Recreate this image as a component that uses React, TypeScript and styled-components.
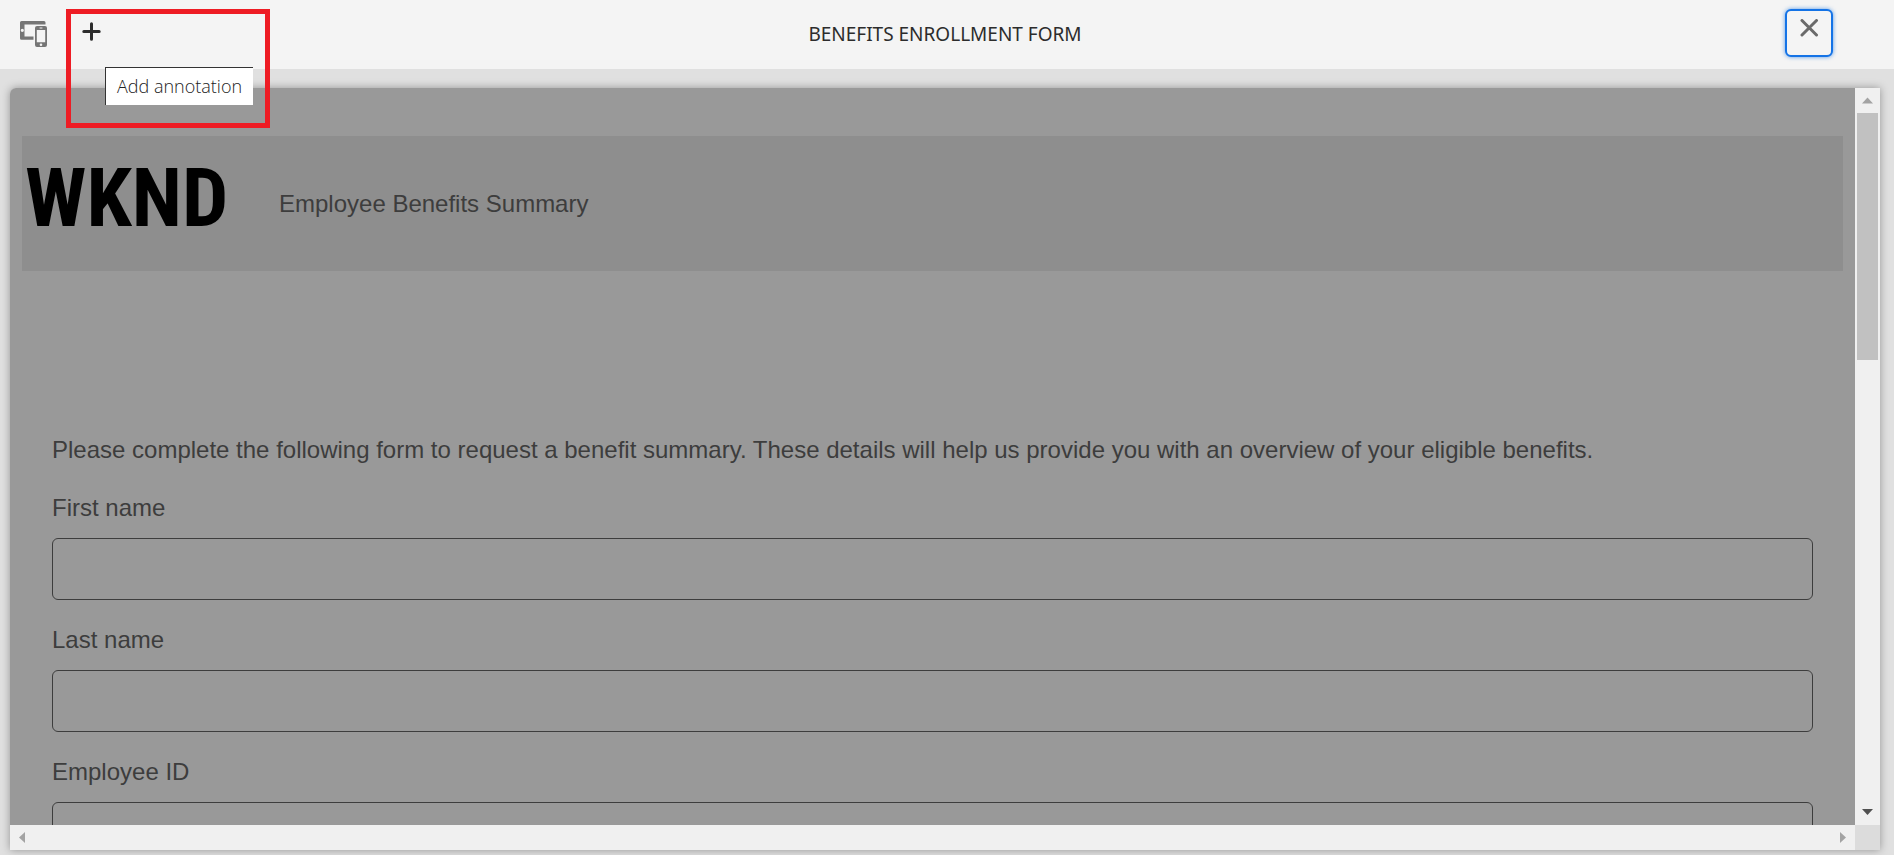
import React from "react";
import styled, { createGlobalStyle } from "styled-components";

const GlobalStyle = createGlobalStyle`
  *, *::before, *::after { box-sizing: border-box; }
  body {
    margin: 0;
    background: #e0e0e0;
    font-family: "Noto Sans", "Open Sans", sans-serif;
    color: #2c2c2c;
  }
`;

const Page = styled.div`
  display: flex;
  flex-direction: column;
  height: 100vh;
  min-height: 400px;
  overflow: hidden;
`;

const Toolbar = styled.header`
  display: grid;
  grid-template-columns: 1fr auto 1fr;
  flex: none;
  height: 69px;
  background: #f4f4f4;
`;

const ToolGroup = styled.div`
  display: flex;
  align-items: flex-start;
  gap: 31px;
  padding: 18px 16px;
`;

const IconButton = styled.button`
  display: flex;
  align-items: center;
  justify-content: center;
  width: 35px;
  height: 32px;
  padding: 0;
  border: 0;
  background: transparent;
  color: #757575;
`;

const AddButton = styled(IconButton)`
  width: 20px;
  height: 28px;
  color: #2c2c2c;
`;

const AddAnchor = styled.div`
  position: relative;
`;

const Highlight = styled.div`
  position: absolute;
  z-index: 2;
  top: -9px;
  left: -16px;
  width: 204px;
  height: 119px;
  border: 5px solid #ee1c24;
  pointer-events: none;
`;

const Tooltip = styled.div`
  position: absolute;
  z-index: 1;
  top: 49px;
  left: 23px;
  padding: 0 11px;
  border: solid #333;
  border-width: 1px 0 0 1px;
  background: #fff;
  color: #222;
  font-family: "Open Sans", sans-serif;
  font-weight: 300;
  font-size: 18px;
  line-height: 37px;
  white-space: nowrap;
`;

const Title = styled.h1`
  margin: 0;
  padding-right: 4px;
  font-size: 19px;
  font-weight: 400;
  line-height: 68px;
  text-transform: uppercase;
`;

const CloseGroup = styled.div`
  display: flex;
  justify-content: flex-end;
  padding: 9px 61px;
`;

const CloseButton = styled.button`
  display: flex;
  justify-content: center;
  width: 48px;
  height: 48px;
  padding: 8px 0;
  border: 2px solid #1473e6;
  border-radius: 6px;
  background: #f4f4f4;
  box-shadow: 0 0 4px rgba(20, 115, 230, 0.7);
  color: #6a6a6a;
`;

const Frame = styled.main`
  display: grid;
  grid-template-columns: minmax(0, 1fr) 25px;
  grid-template-rows: minmax(0, 1fr) 25px;
  flex: 1;
  min-height: 0;
  margin: 19px 14px 5px 10px;
  border-radius: 6px 0 0 0;
  box-shadow: 0 0 8px rgba(0, 0, 0, 0.35);
`;

const Viewport = styled.div`
  overflow: auto;
  scrollbar-width: none;
  padding: 48px 12px 0;
  border-radius: 6px 0 0 0;
  background: #999;
  color: #3d3d3d;
  font-family: "Liberation Sans", Arial, sans-serif;
  font-size: 24px;
  line-height: 36px;
`;

const Banner = styled.div`
  display: flex;
  align-items: center;
  height: 135px;
  padding: 0 3px;
  background: #8e8e8e;
`;

const Logo = styled.div`
  width: 254px;
  padding-bottom: 12px;
  color: #000;
  font-family: "Roboto Condensed", "Liberation Sans Narrow", "DejaVu Sans Condensed", sans-serif;
  font-weight: 700;
  font-size: 82px;
  line-height: 84px;
`;

const FormTitle = styled.h2`
  margin: 0;
  font-size: inherit;
  font-weight: 400;
`;

const Form = styled.form`
  display: flex;
  flex-direction: column;
  gap: 22px;
  padding: 161px 30px 48px;
`;

const Intro = styled.p`
  margin: 0;
`;

const Field = styled.div`
  display: flex;
  flex-direction: column;
  gap: 12px;
`;

const Label = styled.label`
  line-height: 36px;
`;

const TextInput = styled.input`
  width: 100%;
  height: 62px;
  padding: 0 16px;
  border: 1px solid #3d3d3d;
  border-radius: 6px;
  background: transparent;
  color: inherit;
  font: inherit;
`;

const Scrollbar = styled.div<{ $vertical?: boolean }>`
  display: flex;
  flex-direction: ${(p) => (p.$vertical ? "column" : "row")};
  justify-content: space-between;
  background: #f0f0f0;
`;

const ScrollButton = styled.button`
  display: flex;
  align-items: center;
  justify-content: center;
  flex: none;
  width: 25px;
  height: 25px;
  padding: 0;
  border: 0;
  background: transparent;
`;

const Track = styled.div`
  flex: 1;
  padding: 0 2px;
`;

const Thumb = styled.div`
  height: 36%;
  background: #c1c1c1;
`;

const Corner = styled.div`
  background: #dcdcdc;
`;

const DevicesIcon = () => (
  <svg width="27" height="26" viewBox="0 0 27 26" fill="none" aria-hidden="true">
    <path
      fill="currentColor"
      fillRule="evenodd"
      d="M1.5 0H24a1.5 1.5 0 0 1 1.5 1.5V3.4H4.5v12H13.5v3.4H1.5A1.5 1.5 0 0 1 0 17.3V1.5A1.5 1.5 0 0 1 1.5 0ZM2.3 7.7a1.6 1.6 0 1 0 0 3.2a1.6 1.6 0 0 0 0-3.2Z"
    />
    <path
      fill="currentColor"
      fillRule="evenodd"
      d="M17 5h8a2 2 0 0 1 2 2v17a2 2 0 0 1-2 2h-8a2 2 0 0 1-2-2V7a2 2 0 0 1 2-2ZM16.8 9v12.3h8.4V9ZM19.6 6.6v1h2.8v-1ZM21 22.4a1.3 1.3 0 1 0 0 2.6a1.3 1.3 0 0 0 0-2.6Z"
    />
  </svg>
);

const AddIcon = () => (
  <svg width="20" height="20" viewBox="0 0 20 20" stroke="currentColor" strokeWidth="3" strokeLinecap="round" aria-hidden="true">
    <path d="M9.5 1.8V17.2M1.8 9.5H17.2" />
  </svg>
);

const CloseIcon = () => (
  <svg width="20" height="20" viewBox="0 0 20 20" stroke="currentColor" strokeWidth="3" strokeLinecap="round" aria-hidden="true">
    <path d="M3 1.5L17.5 16M17.5 1.5L3 16" />
  </svg>
);

const arrows = {
  up: "M0 8.5L5.5 2.5L11 8.5Z",
  down: "M0 2H11L5.5 8Z",
  left: "M8 0V11L2 5.5Z",
  right: "M3 0V11L9 5.5Z",
};

const Arrow = ({ direction, color }: { direction: keyof typeof arrows; color: string }) => (
  <svg width="11" height="11" viewBox="0 0 11 11" fill={color} aria-hidden="true">
    <path d={arrows[direction]} />
  </svg>
);

const fields = [
  { id: "first-name", label: "First name" },
  { id: "last-name", label: "Last name" },
  { id: "employee-id", label: "Employee ID" },
];

export default function App() {
  return (
    <Page>
      <GlobalStyle />
      <Toolbar>
        <ToolGroup>
          <IconButton type="button" aria-label="Emulator">
            <DevicesIcon />
          </IconButton>
          <AddAnchor>
            <AddButton type="button" aria-label="Add annotation" aria-describedby="add-tip">
              <AddIcon />
            </AddButton>
            <Tooltip id="add-tip" role="tooltip">Add annotation</Tooltip>
            <Highlight />
          </AddAnchor>
        </ToolGroup>
        <Title>Benefits Enrollment Form</Title>
        <CloseGroup>
          <CloseButton type="button" aria-label="Close">
            <CloseIcon />
          </CloseButton>
        </CloseGroup>
      </Toolbar>
      <Frame>
        <Viewport>
          <Banner>
            <Logo>WKND</Logo>
            <FormTitle>Employee Benefits Summary</FormTitle>
          </Banner>
          <Form>
            <Intro>
              Please complete the following form to request a benefit summary. These details will help us provide you
              with an overview of your eligible benefits.
            </Intro>
            {fields.map((f) => (
              <Field key={f.id}>
                <Label htmlFor={f.id}>{f.label}</Label>
                <TextInput id={f.id} type="text" />
              </Field>
            ))}
          </Form>
        </Viewport>
        <Scrollbar $vertical>
          <ScrollButton type="button" aria-label="Scroll up">
            <Arrow direction="up" color="#a3a3a3" />
          </ScrollButton>
          <Track>
            <Thumb />
          </Track>
          <ScrollButton type="button" aria-label="Scroll down">
            <Arrow direction="down" color="#505050" />
          </ScrollButton>
        </Scrollbar>
        <Scrollbar>
          <ScrollButton type="button" aria-label="Scroll left">
            <Arrow direction="left" color="#a3a3a3" />
          </ScrollButton>
          <ScrollButton type="button" aria-label="Scroll right">
            <Arrow direction="right" color="#a3a3a3" />
          </ScrollButton>
        </Scrollbar>
        <Corner />
      </Frame>
    </Page>
  );
}
